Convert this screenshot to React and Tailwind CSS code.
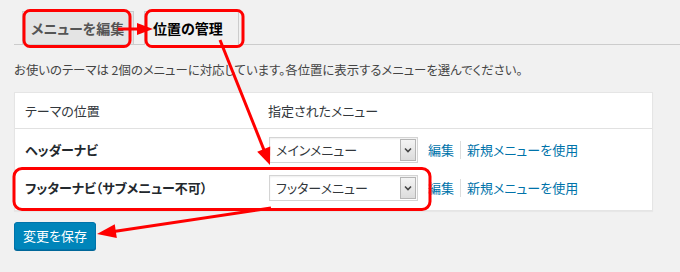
import React from "react";

const SelectBox = ({ value }) => (
  <div className="flex h-[26px] w-[149px] items-center border border-[#d4d4d4] bg-white shadow-[inset_0_1px_2px_rgba(0,0,0,0.07)]">
    <span className="flex-1 pl-[6px] text-[13px] text-[#32373c]">{value}</span>
    <span className="mr-[1px] flex h-[22px] w-[16px] items-center justify-center border border-[#b5b5b5] bg-gradient-to-b from-[#f4f4f4] to-[#dcdcdc]">
      <svg width="8" height="6" viewBox="0 0 8 6">
        <path d="M1 1.5 L4 4.5 L7 1.5" fill="none" stroke="#444" strokeWidth="1.6" />
      </svg>
    </span>
  </div>
);

const Links = () => (
  <div className="ml-[10px] flex items-center text-[13px] text-[#0073aa]">
    <span>編集</span>
    <span className="mx-[6px] h-[18px] w-px bg-[#ddd]" />
    <span>新規メニューを使用</span>
  </div>
);

const Arrow = ({ x1, y1, x2, y2, len = 17, half = 7 }) => {
  const dx = x2 - x1;
  const dy = y2 - y1;
  const d = Math.hypot(dx, dy);
  const ux = dx / d;
  const uy = dy / d;
  const bx = x2 - ux * len;
  const by = y2 - uy * len;
  const px = -uy * half;
  const py = ux * half;
  return (
    <g>
      <line x1={x1} y1={y1} x2={bx + ux * 2} y2={by + uy * 2} stroke="#f00" strokeWidth="3" />
      <polygon points={`${x2},${y2} ${bx + px},${by + py} ${bx - px},${by - py}`} fill="#f00" />
    </g>
  );
};

export default function App() {
  return (
    <div className="relative h-[272px] w-[680px] overflow-hidden bg-[#f1f1f1] font-['Noto_Sans_CJK_JP',sans-serif] [font-feature-settings:'palt'] text-[#23282d]">
      <div className="pl-[14px]">
        <nav className="flex h-[45px] items-end gap-[10px] border-b border-[#ccc] pl-[8px]">
          <div className="flex h-[33px] w-[112px] items-center border border-b-0 border-[#ccc] bg-[#e4e4e4] pl-[8px] text-[14px] font-bold text-[#555]">
            メニューを編集
          </div>
          <div className="-mb-px flex h-[34px] w-[95px] items-center border border-b-0 border-[#ccc] bg-[#f1f1f1] pb-px pl-[8px] text-[14px] font-bold text-black">
            位置の管理
          </div>
        </nav>

        <p className="mt-[17px] h-[16px] text-[12.4px] leading-[16px] text-[#444]">
          お使いのテーマは 2個のメニューに対応しています。各位置に表示するメニューを選んでください。
        </p>

        <div className="mt-[14px] w-[639px] border border-[#e5e5e5] bg-white shadow-[0_1px_1px_rgba(0,0,0,0.04)]">
          <div className="flex h-[36px] items-center border-b border-[#e1e1e1] text-[13px] text-[#32373c]">
            <div className="w-[253px] pl-[10px]">テーマの位置</div>
            <div>指定されたメニュー</div>
          </div>
          <div className="flex h-[40px] items-center pt-[2px]">
            <div className="w-[254px] pl-[10px] text-[13px] font-semibold">ヘッダーナビ</div>
            <SelectBox value="メインメニュー" />
            <Links />
          </div>
          <div className="flex h-[41px] items-center pb-[4px]">
            <div className="w-[254px] pl-[10px] text-[13px] font-semibold">フッターナビ（サブメニュー不可）</div>
            <SelectBox value="フッターメニュー" />
            <Links />
          </div>
        </div>

        <button className="mt-[11px] flex h-[28px] w-[82px] items-center justify-center rounded-[3px] border border-[#0073aa] bg-[#0085ba] text-[13px] text-white shadow-[0_1px_0_#006799]">
          変更を保存
        </button>
      </div>

      <svg className="pointer-events-none absolute left-0 top-0" width="680" height="272">
        <rect x="24" y="10.5" width="106" height="36" rx="6" fill="none" stroke="#f00" strokeWidth="3" />
        <rect x="146" y="10.5" width="97" height="36" rx="6" fill="none" stroke="#f00" strokeWidth="3" />
        <rect x="14" y="168.5" width="416" height="41" rx="8" fill="none" stroke="#f00" strokeWidth="3" />
        <Arrow x1={118} y1={29} x2={153} y2={29} len={16} half={6} />
        <Arrow x1={220} y1={40} x2={270} y2={165} len={17} half={7} />
        <Arrow x1={271} y1={208} x2={97} y2={234} len={19} half={7} />
      </svg>
    </div>
  );
}
